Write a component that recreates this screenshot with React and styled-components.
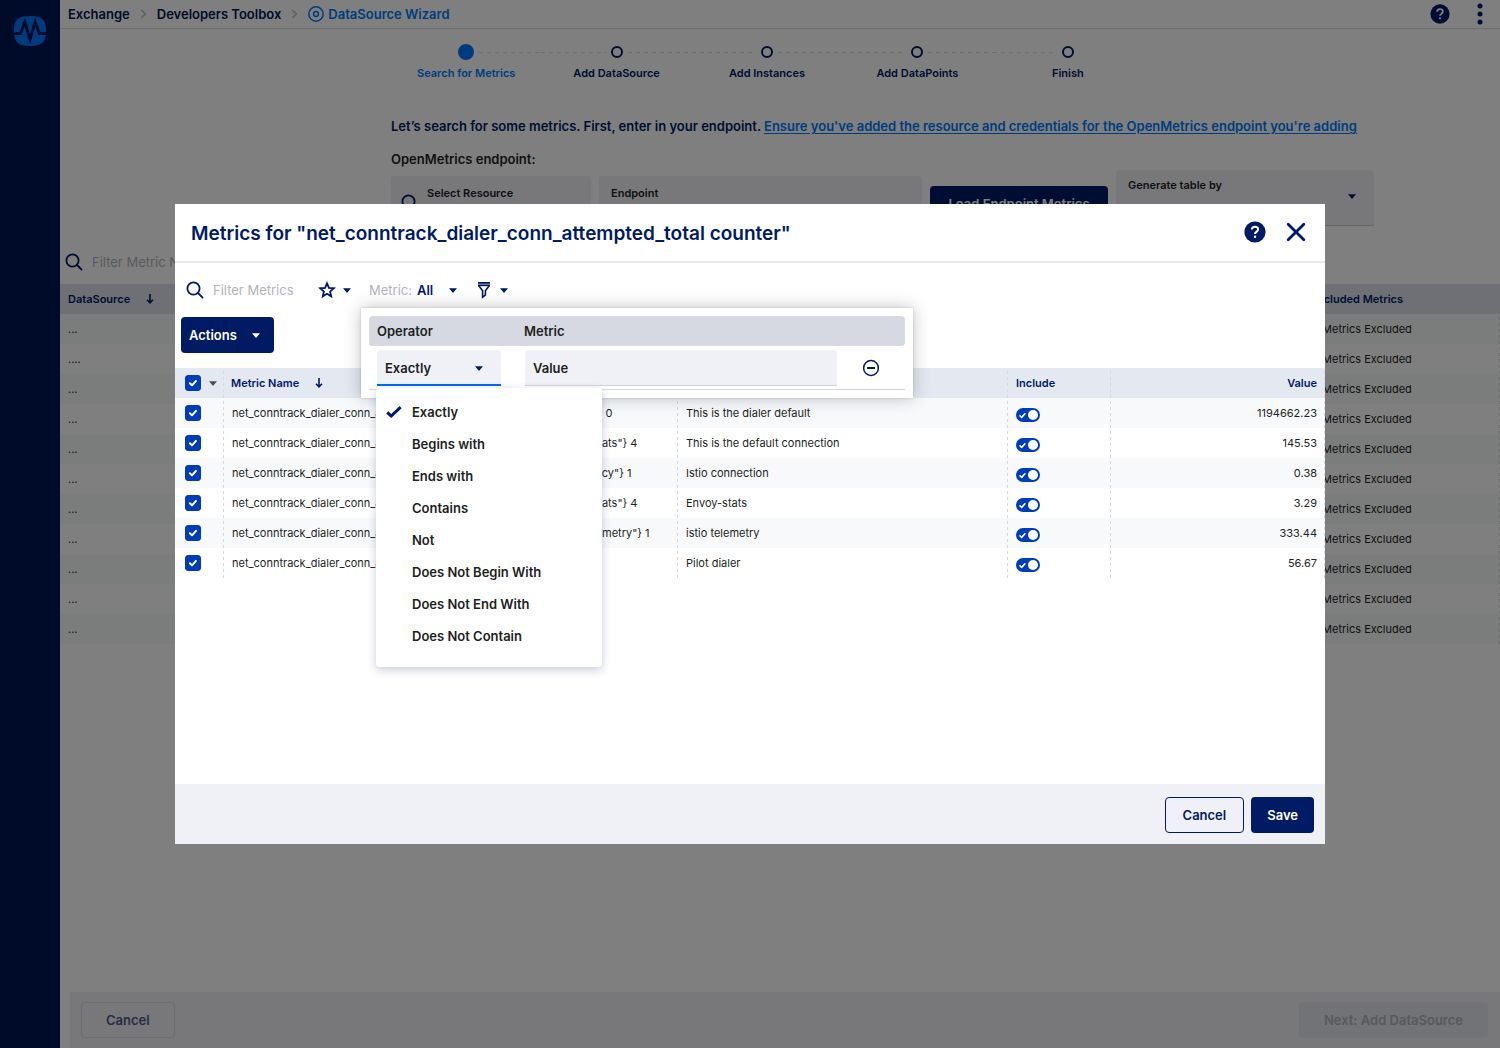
import React, { useState } from 'react';
import styled, { createGlobalStyle, css } from 'styled-components';

const c = {
  navy: '#001a64',
  side: '#001654',
  link: '#0079fa',
  blue: '#003cb8',
  text: '#1d1f24',
  muted: '#b1b3bb',
  field: '#f0f1f6',
  head: '#e4e8f1',
  line: '#d5d8e0',
};

const GlobalStyle = createGlobalStyle`
  * { box-sizing: border-box; }
  body { margin: 0; background: #fff; color: ${c.text}; font: 400 13px/20px Inter, "Liberation Sans", sans-serif; }
  button, input, select { font: inherit; color: inherit; margin: 0; }
  button { cursor: pointer; }
  svg { display: block; flex: none; }
`;

const dashedRight = css`
  background-image: repeating-linear-gradient(to bottom, transparent 0 3px, ${c.line} 3px 6px);
  background-size: 1px 100%;
  background-position: right top;
  background-repeat: no-repeat;
`;

/* ---------- Icons ---------- */

const SearchIcon = () => (
  <svg width="18" height="18" viewBox="0 0 18 18" fill="none" stroke={c.navy} strokeWidth="1.8" strokeLinecap="round">
    <circle cx="7.5" cy="7.5" r="6.1" />
    <path d="M12 12l4.6 4.6" />
  </svg>
);

const CaretShape = styled.svg`
  width: 8px;
  height: 5px;
  fill: ${(p) => p.$color || c.navy};
`;
const Caret = ({ color, className }) => (
  <CaretShape className={className} viewBox="0 0 8 5" $color={color}>
    <path d="M0 .2h8L4.4 4.4a.5.5 0 0 1-.8 0z" />
  </CaretShape>
);

const StarIcon = () => (
  <svg width="18" height="18" viewBox="0 0 18 18" fill="none" stroke={c.navy} strokeWidth="1.8" strokeLinejoin="miter">
    <path d="M9 2.4l1.9 4.5 4.9.4-3.7 3.2 1.1 4.8L9 12.7l-4.2 2.6 1.1-4.8L2.2 7.3l4.9-.4z" />
  </svg>
);

const FunnelIcon = () => (
  <svg width="18" height="18" viewBox="-2 0 18 18" fill="none" stroke={c.navy}>
    <path d="M1 1.9h12" strokeWidth="1.8" />
    <path d="M1 4.3h12" strokeWidth="1.8" />
    <path d="M1.8 4.8L5.6 9.7v6.4l2.8-2V9.7l3.8-4.9" strokeWidth="1.6" />
  </svg>
);

const HelpIcon = ({ size }) => (
  <svg width={size} height={size} viewBox="0 0 22 22">
    <circle cx="11" cy="11" r="10.6" fill={c.navy} />
    <path d="M7.9 8.6c0-1.8 1.3-2.9 3.1-2.9s3.1 1 3.1 2.6c0 1.3-.7 1.9-1.6 2.5-1 .7-1.5 1-1.5 2.2" fill="none" stroke="#fff" strokeWidth="2" />
    <circle cx="11" cy="15.7" r="1.25" fill="#fff" />
  </svg>
);

const CloseIcon = () => (
  <svg width="20" height="20" viewBox="0 0 20 20" stroke={c.navy} strokeWidth="2.8" strokeLinecap="round">
    <path d="M2.2 2.2l15.600 15.600M17.800 2.200L2.200 17.800" />
  </svg>
);

const KebabIcon = () => (
  <svg width="6" height="22" viewBox="0 0 6 22" fill={c.navy}>
    <circle cx="3" cy="3" r="2.5" />
    <circle cx="3" cy="11" r="2.5" />
    <circle cx="3" cy="19" r="2.5" />
  </svg>
);

const ChevronIcon = () => (
  <svg width="7" height="10" viewBox="0 0 7 10" fill="none" stroke="#bdbdbd" strokeWidth="1.6">
    <path d="M1.2 1l4.2 4-4.2 4" />
  </svg>
);

const TargetIcon = () => (
  <svg width="16" height="16" viewBox="0 0 16 16" fill="none" stroke={c.link} strokeWidth="1.5">
    <circle cx="8" cy="8" r="7.2" />
    <circle cx="8" cy="8" r="2.4" />
  </svg>
);

const ArrowDownIcon = () => (
  <svg width="8" height="10" viewBox="0 0 8 10" fill="none" stroke={c.navy} strokeWidth="1.6">
    <path d="M4 0v8.6M1 5.8l3 3 3-3" />
  </svg>
);

const TickIcon = ({ size }) => (
  <svg width={size} height={size} viewBox="0 0 16 16" fill="none" stroke="#fff" strokeWidth="2" strokeLinecap="round" strokeLinejoin="round">
    <path d="M4.9 8.3l2.1 2L11 5.9" />
  </svg>
);

const SelectedIcon = () => (
  <svg width="16" height="12" viewBox="0 0 16 12" fill="none" stroke={c.navy} strokeWidth="3">
    <path d="M1.2 6.4l4 3.6L14.6 1.2" />
  </svg>
);

const MinusIcon = () => (
  <svg width="18" height="18" viewBox="0 0 18 18" fill="none" stroke={c.navy}>
    <circle cx="9" cy="9" r="7.4" strokeWidth="1.5" />
    <path d="M5 9h8" strokeWidth="2" />
  </svg>
);

const Logo = () => (
  <svg width="32" height="30" viewBox="0 0 32 30">
    <path d="M16 0c12 0 16 3.6 16 15s-4 15-16 15S0 26.4 0 15 4 0 16 0z" fill={c.link} />
    <path d="M0 17.6h6.6L10.8 6 16 23.5 21.2 6l4.2 11.6H32" fill="none" stroke={c.side} strokeWidth="2.9" />
  </svg>
);

/* ---------- Shared controls ---------- */

const IconButton = styled.button`
  display: inline-flex;
  align-items: center;
  gap: 7px;
  padding: 0;
  border: 0;
  background: none;
`;

const Button = styled.button`
  display: inline-flex;
  align-items: center;
  justify-content: center;
  height: 36px;
  padding: 0 ${(p) => p.$pad || 16}px;
  border: 1px solid ${(p) => p.$border || 'transparent'};
  border-radius: 4px;
  background: ${(p) => p.$bg || 'transparent'};
  color: ${(p) => p.$color || '#fff'};
  font-weight: 600;
  white-space: nowrap;
`;

const SearchLabel = styled.label`
  display: flex;
  align-items: center;
  gap: 9px;
`;

const PlainInput = styled.input`
  width: ${(p) => p.$width}px;
  padding: 0;
  border: 0;
  outline: 0;
  background: none;
  &::placeholder { color: ${c.muted}; opacity: 1; }
`;

const SelectWrap = styled.span`
  display: grid;
  align-items: center;
  > * { grid-area: 1 / 1; }
  > svg { justify-self: end; margin-right: ${(p) => p.$inset || 0}px; pointer-events: none; }
`;

const PlainSelect = styled.select`
  appearance: none;
  width: 40px;
  padding: 0;
  border: 0;
  background: none;
  color: ${c.navy};
  font-weight: 600;
`;

const CheckWrap = styled.span`
  display: grid;
  align-items: center;
  justify-content: start;
  > * { grid-area: 1 / 1; }
  > svg { pointer-events: none; }
`;

const CheckInput = styled.input`
  appearance: none;
  width: 16px;
  height: 16px;
  border: 1px solid ${c.blue};
  border-radius: 3px;
  &:checked { background: ${c.blue}; }
`;

const Checkbox = ({ label }) => (
  <CheckWrap>
    <CheckInput type="checkbox" defaultChecked aria-label={label} />
    <TickIcon size={16} />
  </CheckWrap>
);

const ToggleInput = styled.input`
  appearance: none;
  width: 24px;
  height: 14px;
  border-radius: 7px;
  background: #9aa0b0;
  &:checked { background: ${c.blue}; }
  &::before {
    content: '';
    display: block;
    width: 10px;
    height: 10px;
    margin: 2px;
    border-radius: 50%;
    background: #fff;
  }
  &:checked::before { margin-left: 12px; }
`;

const ToggleWrap = styled(CheckWrap)`
  margin-top: 4px;
`;

const Toggle = ({ label }) => (
  <ToggleWrap>
    <ToggleInput type="checkbox" role="switch" defaultChecked aria-label={label} />
    <TickIcon size={13} />
  </ToggleWrap>
);

/* ---------- Page shell ---------- */

const Shell = styled.div`
  display: flex;
  min-height: 100vh;
`;

const Sidebar = styled.aside`
  flex: none;
  width: 60px;
  padding: 16px 14px;
  background: ${c.side};
`;

const Main = styled.main`
  flex: 1;
  min-width: 0;
  display: flex;
  flex-direction: column;
`;

const TopBar = styled.header`
  display: flex;
  align-items: center;
  justify-content: space-between;
  height: 29px;
  padding: 0 17px 0 8px;
  border-bottom: 1px solid #dcdcdc;
`;

const Crumbs = styled.nav`
  display: flex;
  align-items: center;
  gap: 10px;
  font-weight: 600;
`;

const Crumb = styled.a`
  display: inline-flex;
  align-items: center;
  gap: 4px;
  color: ${(p) => (p.$current ? c.link : c.side)};
  text-decoration: none;
`;

const TopActions = styled.div`
  display: flex;
  align-items: center;
  gap: 27px;
`;

const Wizard = styled.section`
  padding: 15px 16px 0 331px;
`;

const Steps = styled.ol`
  display: grid;
  grid-template-columns: repeat(5, 1fr);
  max-width: 752px;
  margin: 0;
  padding: 0;
  list-style: none;
  color: ${c.navy};
  font-size: 11px;
  font-weight: 600;
  text-align: center;
`;

const Track = styled.span`
  display: flex;
  align-items: center;
  gap: 5px;
  height: 16px;
  margin-bottom: 3px;
`;

const Dash = styled.span`
  flex: 1;
  height: 1px;
  background: ${(p) => (p.$hidden ? 'none' : 'repeating-linear-gradient(to right, #d9dbe0 0 4px, transparent 4px 8px)')};
`;

const Dot = styled.span`
  width: ${(p) => (p.$active ? 16 : 12)}px;
  height: ${(p) => (p.$active ? 16 : 12)}px;
  border: 2px solid ${(p) => (p.$active ? c.link : c.navy)};
  border-radius: 50%;
  background: ${(p) => (p.$active ? c.link : 'none')};
`;

const Step = styled.li`
  color: ${(p) => (p.$active ? c.link : 'inherit')};
`;

const Intro = styled.p`
  margin: 33px 0 13px;
  color: ${c.navy};
  font-weight: 600;
  white-space: nowrap;
  a { color: ${c.link}; text-underline-offset: 2px; }
`;

const FormTitle = styled.h2`
  margin: 0 0 1px;
  font-size: 13px;
  font-weight: 600;
`;

const EndpointForm = styled.div`
  display: grid;
  grid-template-columns: 200px minmax(160px, 323px) 178px 258px;
  align-items: end;
  gap: 8px;
  height: 62px;
`;

const Field = styled.label`
  display: grid;
  grid-template-columns: ${(p) => (p.$icon ? '18px 1fr' : '1fr')};
  align-items: center;
  column-gap: 8px;
  align-self: ${(p) => (p.$top ? 'start' : 'end')};
  height: 56px;
  padding: 4px 12px 6px ${(p) => (p.$icon ? 10 : 12)}px;
  border-bottom: 1px solid #c8ccd6;
  border-radius: 4px 4px 0 0;
  background: ${c.field};
  font-size: 11px;
  font-weight: 600;
`;

const FieldText = styled.span`
  display: flex;
  flex-direction: column;
  min-width: 0;
`;

const GhostSelect = styled.select`
  appearance: none;
  width: 100%;
  height: 24px;
  padding: 0;
  border: 0;
  background: none;
`;

const LoadButton = styled(Button)`
  margin-bottom: 10px;
`;

const ListTools = styled.div`
  display: flex;
  align-items: center;
  height: 44px;
  margin-top: 8px;
  padding-left: 5px;
`;

const ListTable = styled.table`
  width: 100%;
  border-collapse: collapse;
  table-layout: fixed;
  font-size: 11px;
  th {
    height: 30px;
    padding: 0 8px;
    background: #dde1ec;
    color: ${c.navy};
    font-weight: 600;
    text-align: left;
  }
  td { height: 30px; padding: 0 8px; }
  tbody tr:nth-child(odd) { background: #f5faf9; }
  th:last-child { padding-left: 10px; }
  td:last-child { padding-left: 11px; ${dashedRight} }
`;

const ListCol = styled.col`
  width: ${(p) => p.$width};
`;

const SortHead = styled.span`
  display: inline-flex;
  align-items: center;
  gap: 16px;
`;

const PageFooter = styled.footer`
  display: flex;
  align-items: flex-start;
  justify-content: space-between;
  height: 56px;
  margin: auto 0 0 10px;
  padding: 10px 12px 0 11px;
  background: #f1f1f5;
`;

/* ---------- Modal ---------- */

const Overlay = styled.div`
  position: fixed;
  inset: 0;
  display: flex;
  align-items: center;
  justify-content: center;
  background: rgba(0, 0, 0, 0.5);
`;

const Dialog = styled.section`
  display: flex;
  flex-direction: column;
  width: min(1150px, 96vw);
  min-height: 640px;
  background: #fff;
`;

const DialogHead = styled.header`
  display: flex;
  align-items: center;
  gap: 20px;
  height: 59px;
  padding: 0 19px 2px 16px;
  border-bottom: 2px solid #e4e8ed;
`;

const DialogTitle = styled.h1`
  flex: 1;
  margin: 0;
  padding-top: 4px;
  color: ${c.navy};
  font-size: 19px;
  font-weight: 600;
  line-height: 24px;
`;

const Filters = styled.div`
  position: relative;
  display: flex;
  align-items: center;
  gap: 18px;
  height: 54px;
  padding-left: 11px;
`;

const NamedSelect = styled.label`
  display: flex;
  align-items: center;
  gap: 5px;
  color: ${c.muted};
`;

const Popover = styled.div`
  position: absolute;
  z-index: 2;
  top: 45px;
  left: 186px;
  width: 552px;
  padding: 8px;
  background: #fff;
  box-shadow: 0 0 2px rgba(20, 20, 40, 0.2), 0 0 16px rgba(40, 40, 50, 0.28);
  color: ${c.text};
  font-weight: 600;
`;

const RuleHead = styled.div`
  display: grid;
  grid-template-columns: 147px 1fr;
  align-items: center;
  height: 30px;
  padding: 0 8px;
  border-radius: 4px;
  background: #d6d9e1;
`;

const Rule = styled.div`
  display: grid;
  grid-template-columns: 124px 312px 20px;
  gap: 24px;
  align-items: center;
  margin-top: 4px;
  padding: 0 8px 3px;
  border-bottom: 1px solid ${c.line};
  > button { justify-content: center; }
`;

const Operator = styled.div`
  position: relative;
`;

const OperatorSelect = styled.select`
  appearance: none;
  width: 100%;
  height: 36px;
  padding: 2px 8px 0;
  border: 0;
  border-bottom: 2px solid #0068ff;
  border-radius: 4px 4px 0 0;
  outline: 0;
  background: ${c.field};
`;

const ValueInput = styled.input`
  width: 100%;
  height: 36px;
  padding: 0 8px;
  border: 0;
  border-bottom: 1px solid #cfd4dd;
  border-radius: 4px 4px 0 0;
  background: ${c.field};
  &::placeholder { color: ${c.text}; opacity: 1; }
`;

const Menu = styled.ul`
  position: absolute;
  top: 38px;
  left: -1px;
  width: 226px;
  margin: 0;
  padding: 8px 0 15px;
  border-radius: 0 0 4px 4px;
  background: #fff;
  box-shadow: 0 3px 10px rgba(30, 40, 90, 0.24);
  list-style: none;
`;

const MenuItem = styled.li`
  display: grid;
  grid-template-columns: 16px 1fr;
  gap: 10px;
  align-items: center;
  height: 32px;
  padding-left: 10px;
`;

const MenuText = styled.span`
  grid-column: 2;
`;

const ActionsButton = styled(Button)`
  align-self: flex-start;
  gap: 15px;
  margin-left: 6px;
  padding: 0 13px 0 7px;
`;

const MetricsTable = styled.table`
  width: 100%;
  margin-top: 15px;
  border-collapse: collapse;
  table-layout: fixed;
  font-size: 11px;
  th, td {
    height: 30px;
    padding: 0 8px;
    text-align: left;
    white-space: nowrap;
    ${dashedRight}
  }
  th {
    background-color: ${c.head};
    color: ${c.navy};
    font-weight: 600;
  }
  th:nth-child(2) { padding-left: 7px; }
  tbody tr:nth-child(odd) { background: #f7f9fb; }
  th:first-child, td:first-child { padding: 0 0 0 10px; }
  th:last-child, td:last-child { text-align: right; }
`;

const CheckHead = styled.span`
  display: flex;
  align-items: center;
  gap: 8px;
`;

const DialogFoot = styled.footer`
  display: flex;
  align-items: center;
  justify-content: flex-end;
  gap: 7px;
  height: 60px;
  margin-top: auto;
  padding: 2px 11px 0;
  background: ${c.field};
`;

/* ---------- Data ---------- */

const steps = ['Search for Metrics', 'Add DataSource', 'Add Instances', 'Add DataPoints', 'Finish'];
const sources = ['...', '....', '...', '...', '...', '...', '...', '...', '...', '...', '...'];
const operators = ['Exactly', 'Begins with', 'Ends with', 'Contains', 'Not', 'Does Not Begin With', 'Does Not End With', 'Does Not Contain'];
const prefix = 'net_conntrack_dialer_conn_attempted_total{job_dialer_name=';
const metrics = [
  ['"default"} 0', 'This is the dialer default', '1194662.23'],
  ['"envoy-stats"} 4', 'This is the default connection', '145.53'],
  ['"istio-policy"} 1', 'Istio connection', '0.38'],
  ['"envoy-stats"} 4', 'Envoy-stats', '3.29'],
  ['"istio-telemetry"} 1', 'istio telemetry', '333.44'],
  ['"pilot"} 1', 'Pilot dialer', '56.67'],
];

/* ---------- Page ---------- */

function WizardPage() {
  return (
    <Shell>
      <Sidebar><Logo /></Sidebar>
      <Main>
        <TopBar>
          <Crumbs aria-label="Breadcrumb">
            <Crumb href="#exchange">Exchange</Crumb>
            <ChevronIcon />
            <Crumb href="#toolbox">Developers Toolbox</Crumb>
            <ChevronIcon />
            <Crumb href="#wizard" $current><TargetIcon />DataSource Wizard</Crumb>
          </Crumbs>
          <TopActions>
            <IconButton aria-label="Help"><HelpIcon size={20} /></IconButton>
            <IconButton aria-label="More"><KebabIcon /></IconButton>
          </TopActions>
        </TopBar>

        <Wizard>
          <Steps>
            {steps.map((s, i) => (
              <Step key={s} $active={i === 0}>
                <Track>
                  <Dash $hidden={i === 0} />
                  <Dot $active={i === 0} />
                  <Dash $hidden={i === steps.length - 1} />
                </Track>
                {s}
              </Step>
            ))}
          </Steps>
          <Intro>
            Let’s search for some metrics. First, enter in your endpoint.{' '}
            <a href="#resource">Ensure you've added the resource and credentials for the OpenMetrics endpoint you're adding</a>
          </Intro>
          <FormTitle>OpenMetrics endpoint:</FormTitle>
          <EndpointForm>
            <Field $icon>
              <SearchIcon />
              <FieldText>Select Resource<PlainInput $width={150} /></FieldText>
            </Field>
            <Field><FieldText>Endpoint<PlainInput $width={290} /></FieldText></Field>
            <LoadButton $bg={c.navy}>Load Endpoint Metrics</LoadButton>
            <Field $top>
              <SelectWrap $inset={6}>
                <FieldText>Generate table by<GhostSelect /></FieldText>
                <Caret />
              </SelectWrap>
            </Field>
          </EndpointForm>
        </Wizard>

        <ListTools>
          <SearchLabel>
            <SearchIcon />
            <PlainInput $width={160} placeholder="Filter Metric Name" aria-label="Filter Metric Name" />
          </SearchLabel>
        </ListTools>
        <ListTable>
          <colgroup><ListCol $width="auto" /><ListCol $width="199px" /></colgroup>
          <thead>
            <tr>
              <th><SortHead>DataSource<ArrowDownIcon /></SortHead></th>
              <th>Excluded Metrics</th>
            </tr>
          </thead>
          <tbody>
            {sources.map((s, i) => (
              <tr key={i}><td>{s}</td><td>0 Metrics Excluded</td></tr>
            ))}
          </tbody>
        </ListTable>

        <PageFooter>
          <Button $pad={24} $border="#dcdce4" $color="#4a5a90">Cancel</Button>
          <Button $pad={24} $bg="#e5e6ec" $color="#b0b2ba" disabled>Next: Add DataSource</Button>
        </PageFooter>
      </Main>
    </Shell>
  );
}

function FilterPopover() {
  const [operator, setOperator] = useState('Exactly');
  return (
    <Popover>
      <RuleHead><span>Operator</span><span>Metric</span></RuleHead>
      <Rule>
        <Operator>
          <SelectWrap $inset={18}>
            <OperatorSelect aria-label="Operator" value={operator} onChange={(e) => setOperator(e.target.value)}>
              {operators.map((o) => <option key={o}>{o}</option>)}
            </OperatorSelect>
            <Caret />
          </SelectWrap>
          <Menu role="listbox" aria-label="Operator options">
            {operators.map((o) => (
              <MenuItem key={o} role="option" aria-selected={o === operator} onClick={() => setOperator(o)}>
                {o === operator && <SelectedIcon />}
                <MenuText>{o}</MenuText>
              </MenuItem>
            ))}
          </Menu>
        </Operator>
        <ValueInput placeholder="Value" aria-label="Metric value" />
        <IconButton aria-label="Remove rule"><MinusIcon /></IconButton>
      </Rule>
    </Popover>
  );
}

export default function App() {
  return (
    <>
      <GlobalStyle />
      <WizardPage />
      <Overlay>
        <Dialog role="dialog" aria-modal="true" aria-labelledby="dialog-title">
          <DialogHead>
            <DialogTitle id="dialog-title">Metrics for "net_conntrack_dialer_conn_attempted_total counter"</DialogTitle>
            <IconButton aria-label="Help"><HelpIcon size={22} /></IconButton>
            <IconButton aria-label="Close"><CloseIcon /></IconButton>
          </DialogHead>

          <Filters>
            <SearchLabel>
              <SearchIcon />
              <PlainInput $width={87} placeholder="Filter Metrics" aria-label="Filter Metrics" />
            </SearchLabel>
            <IconButton aria-label="Favourites"><StarIcon /><Caret /></IconButton>
            <NamedSelect>
              Metric:
              <SelectWrap>
                <PlainSelect defaultValue="All"><option>All</option></PlainSelect>
                <Caret />
              </SelectWrap>
            </NamedSelect>
            <IconButton aria-label="Filter" aria-expanded="true"><FunnelIcon /><Caret /></IconButton>
            <FilterPopover />
          </Filters>

          <ActionsButton $bg={c.navy}>Actions<Caret color="#fff" /></ActionsButton>

          <MetricsTable>
            <colgroup>
              <ListCol $width="49px" />
              <ListCol $width="454px" />
              <ListCol $width="330px" />
              <ListCol $width="103px" />
              <ListCol $width="auto" />
            </colgroup>
            <thead>
              <tr>
                <th><CheckHead><Checkbox label="Select all metrics" /><Caret color="#4b4d55" /></CheckHead></th>
                <th><SortHead>Metric Name<ArrowDownIcon /></SortHead></th>
                <th aria-label="Description" />
                <th>Include</th>
                <th>Value</th>
              </tr>
            </thead>
            <tbody>
              {metrics.map(([name, description, value], i) => (
                <tr key={i}>
                  <td><Checkbox label={`Select ${description}`} /></td>
                  <td>{prefix + name}</td>
                  <td>{description}</td>
                  <td><Toggle label={`Include ${description}`} /></td>
                  <td>{value}</td>
                </tr>
              ))}
            </tbody>
          </MetricsTable>

          <DialogFoot>
            <Button $pad={17} $border={c.navy} $color={c.navy}>Cancel</Button>
            <Button $pad={15} $bg={c.navy}>Save</Button>
          </DialogFoot>
        </Dialog>
      </Overlay>
    </>
  );
}
